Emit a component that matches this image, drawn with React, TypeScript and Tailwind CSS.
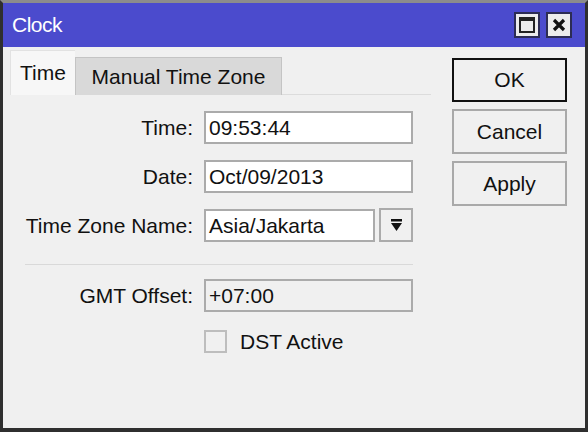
import { useState } from "react";

const font = "font-['Liberation_Sans',Arial,sans-serif]";

function Field({ value, disabled = false }: { value: string; disabled?: boolean }) {
  return (
    <div
      className={`h-[33px] border-2 border-[#ababab] flex items-center pl-[3px] text-[21px] text-[#111] ${
        disabled ? "bg-[#f0f0f0]" : "bg-white"
      }`}
    >
      {value}
    </div>
  );
}

function Label({ children }: { children: string }) {
  return <div className="h-[33px] flex items-center justify-end text-[21px] text-[#111]">{children}</div>;
}

export default function App() {
  const [tab, setTab] = useState(0);
  const [dst, setDst] = useState(false);

  return (
    <div
      className={`w-[588px] h-[432px] bg-[#f0f0f0] border-x-[3px] border-b-[4px] border-t-[3px] border-[#2f2f2f] border-t-[#8c8c8c] flex flex-col ${font}`}
    >
      {/* Title bar */}
      <div className="h-[44px] bg-[#4b4bcd] flex items-center pl-[9px] pr-[13px]">
        <span className="text-[21px] text-white tracking-[-0.5px]">Clock</span>
        <div className="ml-auto flex gap-[6px]">
          <button className="w-[26px] h-[26px] bg-[#ececec] border-2 border-[#2c2c54] flex items-center justify-center">
            <svg width="16" height="16" viewBox="0 0 16 16">
              <rect x="1" y="1" width="14" height="14" fill="none" stroke="#222" strokeWidth="2" />
              <rect x="1" y="1" width="14" height="3" fill="#222" />
            </svg>
          </button>
          <button className="w-[26px] h-[26px] bg-[#ececec] border-2 border-[#2c2c54] flex items-center justify-center">
            <svg width="14" height="14" viewBox="0 0 14 14">
              <path d="M2 2 L12 12 M12 2 L2 12" stroke="#111" strokeWidth="3.2" />
            </svg>
          </button>
        </div>
      </div>

      {/* Body */}
      <div className="flex flex-1 pl-[7px] pt-[3px]">
        <div className="w-[421px] flex flex-col">
          {/* Tabs */}
          <div className="h-[45px] flex items-end">
            <button
              onClick={() => setTab(0)}
              className={`h-[45px] w-[65px] text-[21px] text-[#111] border-t border-l border-[#e2e2e2] ${
                tab === 0 ? "bg-[#f7f7f7]" : "bg-[#d9d9d9]"
              }`}
            >
              Time
            </button>
            <button
              onClick={() => setTab(1)}
              className={`h-[38px] w-[207px] text-[21px] text-[#111] border border-b-0 border-[#c4c4c4] ${
                tab === 1 ? "bg-[#f7f7f7]" : "bg-[#d9d9d9]"
              }`}
            >
              Manual Time Zone
            </button>
            <div className="flex-1 border-b border-[#dcdcdc]" />
          </div>

          {/* Panel */}
          <div className="h-[322px] border-l border-[#f0f0f0] border-r-2 border-b-2 border-[#a7a7a7] pt-[16px]">
            <div className="grid grid-cols-[182px_209px] gap-x-[11px] gap-y-[16px]">
              <Label>Time:</Label>
              <Field value="09:53:44" />
              <Label>Date:</Label>
              <Field value="Oct/09/2013" />
              <Label>Time Zone Name:</Label>
              <div className="flex gap-[4px]">
                <div className="flex-1">
                  <Field value="Asia/Jakarta" />
                </div>
                <button className="w-[34px] h-[34px] -mt-[1px] bg-[#f0f0f0] border-2 border-[#ababab] flex items-center justify-center">
                  <svg width="13" height="15" viewBox="0 0 13 15">
                    <rect x="1" y="1" width="11" height="2.5" fill="#111" />
                    <path d="M1 5 H12 L6.5 13 Z" fill="#111" />
                  </svg>
                </button>
              </div>
            </div>

            <div className="ml-[14px] w-[388px] h-px bg-[#d9d9d9] mt-[22px] mb-[14px]" />

            <div className="grid grid-cols-[182px_209px] gap-x-[11px] gap-y-[16px]">
              <Label>GMT Offset:</Label>
              <Field value="+07:00" disabled />
            </div>
            <label className="flex items-center ml-[193px] mt-[14px] cursor-pointer">
              <input
                type="checkbox"
                checked={dst}
                onChange={(e) => setDst(e.target.checked)}
                className="appearance-none w-[23px] h-[23px] border-2 border-[#bdbdbd] bg-[#f0f0f0]"
              />
              <span className="ml-[13px] text-[21px] text-[#111]">DST Active</span>
            </label>
          </div>
        </div>

        {/* Buttons */}
        <div className="ml-[21px] pt-[8px] flex flex-col gap-[7px]">
          <button className="w-[115px] h-[44px] border-2 border-[#111] bg-[#f0f0f0] text-[21px] text-[#111]">OK</button>
          <button className="w-[115px] h-[45px] border-2 border-[#a9a9a9] bg-[#f0f0f0] text-[21px] text-[#111]">Cancel</button>
          <button className="w-[115px] h-[45px] border-2 border-[#a9a9a9] bg-[#f0f0f0] text-[21px] text-[#111]">Apply</button>
        </div>
      </div>
    </div>
  );
}
